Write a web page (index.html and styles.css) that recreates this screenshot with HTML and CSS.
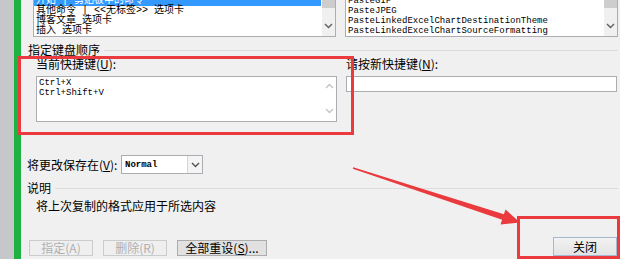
FILE: index.html
```html
<!DOCTYPE html>
<html lang="zh-CN">
<head>
<meta charset="utf-8">
<title>自定义键盘</title>
<link rel="stylesheet" href="styles.css">
</head>
<body>
<div class="frame">
  <div class="side"></div>
  <div class="accent"></div>
  <div class="dialog">
    <div class="lists">
      <div class="listbox">
        <div class="items">
          <div class="item zh sel">开始 | 剪贴板中的命令</div>
          <div class="item zh">其他命令 | &lt;&lt;无标签&gt;&gt; 选项卡</div>
          <div class="item zh">博客文章 选项卡</div>
          <div class="item zh">插入 选项卡</div>
        </div>
        <div class="vscroll">
          <div class="thumb"></div>
          <svg class="chev" width="9" height="6" viewBox="0 0 9 6"><polyline points="1,1 4.5,4.5 8,1" fill="none" stroke="#606060" stroke-width="1.4"/></svg>
        </div>
      </div>
      <div class="listbox">
        <div class="items mono">
          <div class="item">PasteGIF</div>
          <div class="item">PasteJPEG</div>
          <div class="item">PasteLinkedExcelChartDestinationTheme</div>
          <div class="item">PasteLinkedExcelChartSourceFormatting</div>
        </div>
        <div class="vscroll">
          <div class="thumb"></div>
          <svg class="chev" width="9" height="6" viewBox="0 0 9 6"><polyline points="1,1 4.5,4.5 8,1" fill="none" stroke="#606060" stroke-width="1.4"/></svg>
        </div>
      </div>
    </div>

    <div class="group keys-head">指定键盘顺序</div>

    <div class="keys">
      <div class="keycol">
        <div class="label">当前快捷键(<u>U</u>):</div>
        <div class="textbox">
          <div class="lines mono">
            <div>Ctrl+X</div>
            <div>Ctrl+Shift+V</div>
          </div>
          <div class="tscroll">
            <svg width="9" height="6" viewBox="0 0 9 6"><polyline points="1,5 4.5,1.5 8,5" fill="none" stroke="#c4c4c4" stroke-width="1.4"/></svg>
            <svg width="9" height="6" viewBox="0 0 9 6"><polyline points="1,1 4.5,4.5 8,1" fill="none" stroke="#c4c4c4" stroke-width="1.4"/></svg>
          </div>
        </div>
      </div>
      <div class="keycol">
        <div class="label">请按新快捷键(<u>N</u>):</div>
        <div class="input"></div>
      </div>
    </div>

    <div class="saverow">
      <div class="savelabel">将更改保存在(<u>V</u>):</div>
      <div class="select">
        <span class="selval">Normal</span>
        <span class="selbtn"><svg width="9" height="6" viewBox="0 0 9 6"><polyline points="1,1 4.5,4.5 8,1" fill="none" stroke="#505050" stroke-width="1.4"/></svg></span>
      </div>
    </div>

    <div class="group desc-head">说明</div>
    <div class="desc">将上次复制的格式应用于所选内容</div>

    <div class="buttons">
      <div class="left-btns">
        <button class="btn disabled">指定(A)</button>
        <button class="btn disabled">删除(R)</button>
        <button class="btn wide">全部重设(<u>S</u>)...</button>
      </div>
      <button class="btn close">关闭</button>
    </div>
  </div>
</div>

<div class="mark mark-keys"></div>
<div class="mark mark-close"></div>
<svg class="arrow" width="620" height="259" viewBox="0 0 620 259">
  <polygon points="353.2,167.3 503.9,214.2 505.5,209.4 520,222.5 500.5,224.6 502.1,219.8 352.8,168.7" fill="#ea3a3d"/>
</svg>
</body>
</html>
```

FILE: styles.css
```css
* { box-sizing: border-box; }

html, body {
  margin: 0;
  padding: 0;
  width: 620px;
  height: 259px;
  overflow: hidden;
  background: #f0f0f0;
  font-family: "Noto Sans CJK SC", "Liberation Sans", sans-serif;
  font-size: 12px;
  color: #000;
}

.frame {
  display: flex;
  height: 259px;
}

.side {
  width: 14px;
  background: #c6c7c9;
}

.accent {
  width: 7px;
  background: #1fb141;
}

.dialog {
  flex: 1;
  padding: 0 2px 0 6px;
  background: #f0f0f0;
}

.mono {
  font-family: "Liberation Mono", "Noto Sans CJK SC", monospace;
  font-size: 9px;
}

/* top list boxes */
.lists {
  display: grid;
  grid-template-columns: 303px 273px;
  column-gap: 9px;
  margin-left: 6px;
  margin-top: -5px;
}

.listbox {
  position: relative;
  height: 42px;
  background: #fff;
  border: 1px solid #abadb3;
  overflow: hidden;
  display: flex;
}

.items {
  flex: 1;
  padding-left: 2px;
}

.item {
  height: 10px;
  line-height: 10px;
  white-space: nowrap;
}

.item.zh {
  font-family: "Liberation Mono", "Noto Sans CJK SC", monospace;
  font-size: 10px;
}

.item.sel {
  background: #3399ff;
  color: #fff;
  margin-left: -2px;
  padding-left: 2px;
  margin-right: 1px;
}

.vscroll {
  width: 13px;
  background: #f0f0f0;
  display: flex;
  flex-direction: column;
  align-items: center;
}

.thumb {
  width: 13px;
  height: 12px;
  background: #cdcdcd;
}

.chev {
  margin-top: 15px;
}

/* group headers */
.group {
  display: flex;
  align-items: center;
  gap: 4px;
  height: 12px;
  line-height: 12px;
  margin-top: 6px;
  white-space: nowrap;
}

.group::after {
  content: "";
  flex: 1;
  border-top: 1px solid #dcdcdc;
}

.keys-head {
  margin-top: 7px;
  margin-left: 1px;
}

/* shortcut keys */
.keys {
  display: grid;
  grid-template-columns: 301px 271px;
  column-gap: 9px;
  margin-left: 9px;
  margin-top: 2px;
}

.label {
  height: 12px;
  line-height: 12px;
  white-space: nowrap;
}

.textbox {
  margin-top: 6px;
  height: 46px;
  background: #fff;
  border: 1px solid #abadb3;
  display: flex;
}

.lines {
  flex: 1;
  padding: 1px 0 0 2px;
  line-height: 10px;
}

.tscroll {
  width: 14px;
  display: flex;
  flex-direction: column;
  align-items: center;
  justify-content: space-between;
  padding: 6px 0 7px;
}

.input {
  margin-top: 6px;
  height: 16px;
  background: #fff;
  border: 1px solid #abadb3;
}

/* save row */
.saverow {
  display: flex;
  align-items: center;
  height: 19px;
  margin-top: 33px;
}

.savelabel {
  width: 94px;
  white-space: nowrap;
}

.select {
  width: 82px;
  height: 19px;
  border: 1px solid #abadb3;
  background: #fff;
  display: flex;
  align-items: center;
}

.selval {
  flex: 1;
  padding-left: 3px;
  font-family: "Liberation Mono", monospace;
  font-size: 9px;
  font-weight: bold;
}

.selbtn {
  width: 15px;
  height: 17px;
  border-left: 1px solid #d6d6d6;
  background: #f4f4f4;
  display: flex;
  align-items: center;
  justify-content: center;
}

.desc-head {
  margin-top: 8px;
}

.desc {
  margin-left: 9px;
  margin-top: 6px;
  height: 12px;
  line-height: 12px;
}

/* buttons */
.buttons {
  display: flex;
  justify-content: space-between;
  align-items: flex-end;
  margin-top: 25px;
}

.left-btns {
  display: flex;
  gap: 10px;
  margin-left: 2px;
}

.btn {
  font-family: "Noto Sans CJK SC", "Liberation Sans", sans-serif;
  font-size: 12px;
  line-height: 14px;
  height: 16px;
  padding: 0;
  width: 64px;
  border: 1px solid #adadad;
  background: #e1e1e1;
  color: #000;
}

.btn.disabled {
  color: #b0b0b0;
  border-color: #cccccc;
  background: #efefef;
}

.btn.wide {
  width: 90px;
}

.btn.close {
  width: 64px;
  height: 19px;
  line-height: 17px;
  margin-right: 1px;
  border-color: #a4b8cf;
  background: linear-gradient(#f2f2f2, #e3e3e3);
}

/* annotations */
.mark {
  position: absolute;
  border: 3px solid #ea3a3d;
}

.mark-keys {
  left: 18px;
  top: 56px;
  width: 336px;
  height: 79px;
}

.mark-close {
  left: 517px;
  top: 216px;
  width: 103px;
  height: 43px;
}

.arrow {
  position: absolute;
  left: 0;
  top: 0;
  pointer-events: none;
}
```
